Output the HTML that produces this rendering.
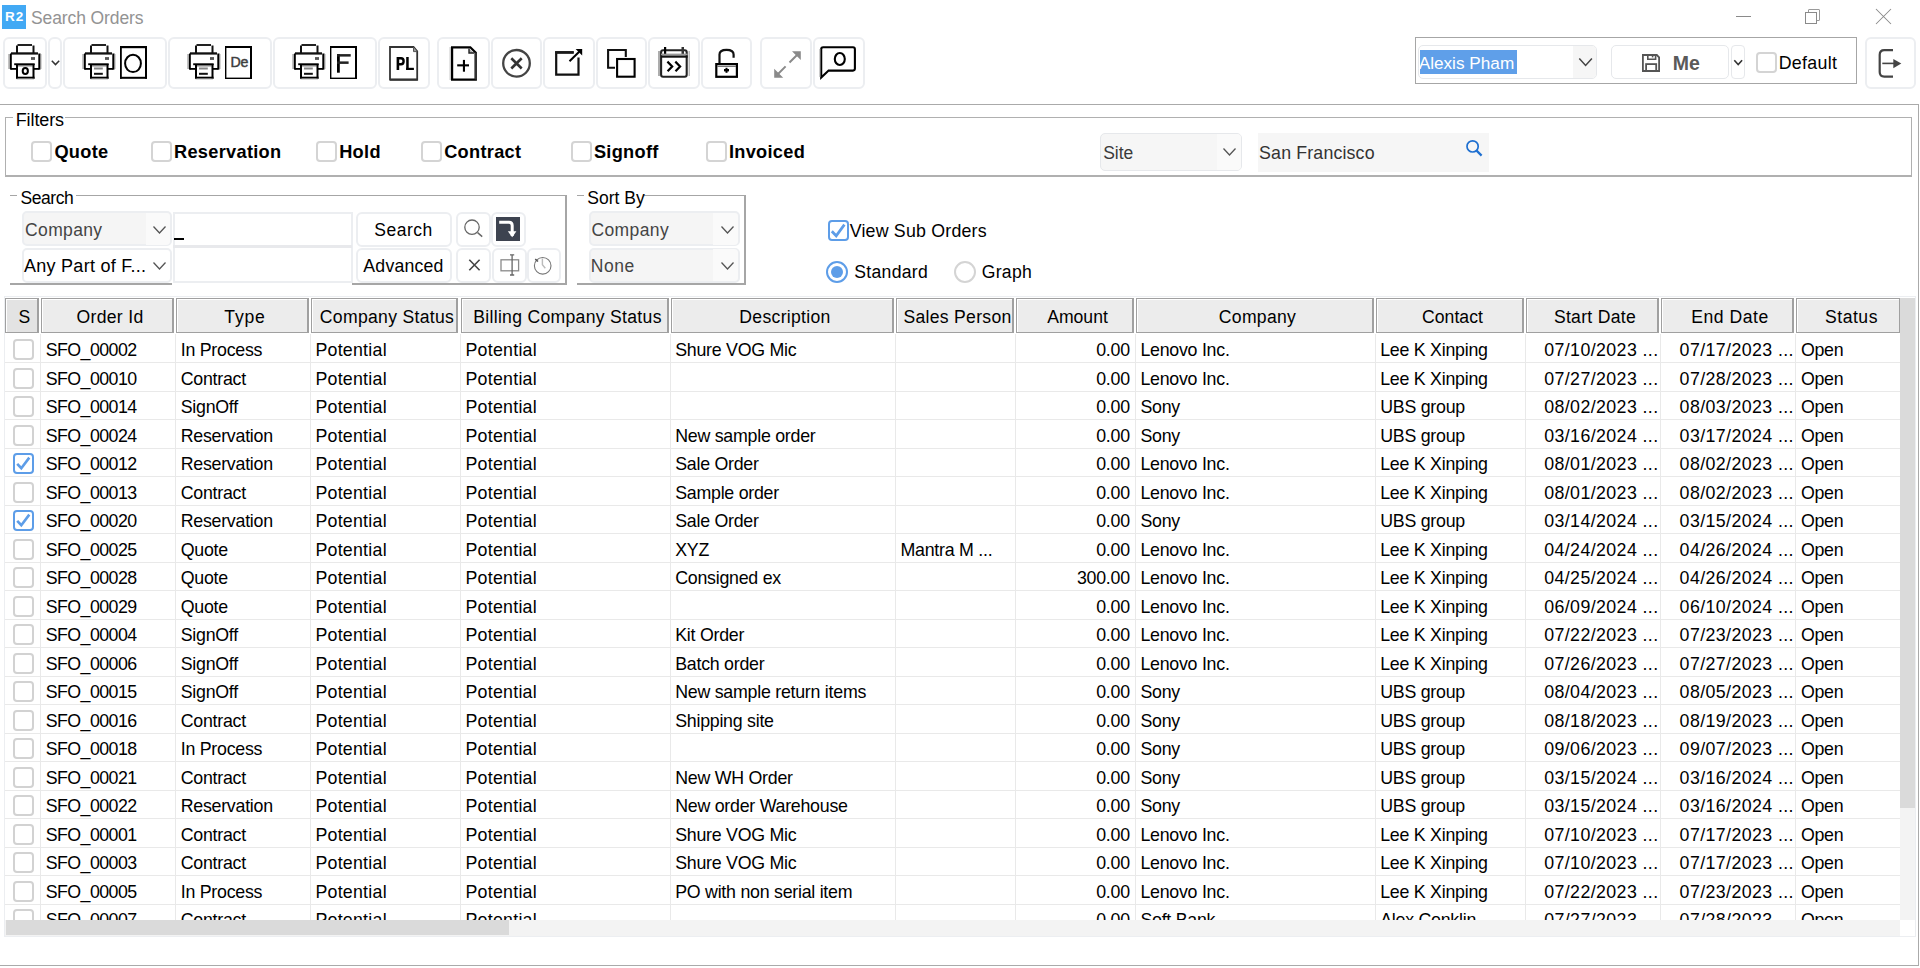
<!DOCTYPE html>
<html><head><meta charset="utf-8"><style>
html,body{margin:0;padding:0;background:#fff;width:1920px;height:968px;overflow:hidden;position:relative}
.t{position:absolute;white-space:nowrap;font-family:"Liberation Sans", sans-serif}
</style></head><body>
<div style="position:absolute;left:2px;top:5px;width:24px;height:24px;background:#42a9f4"></div>
<div class="t" style="left:2.6px;top:10.17px;font-size:13.5px;line-height:13.5px;font-weight:700;color:#fff;width:24px;text-align:center;letter-spacing:0.9px">R2</div>
<div class="t" style="left:30.999999999999996px;top:10.19px;font-size:17.5px;line-height:17.5px;font-weight:400;color:#939393;letter-spacing:-0.1px">Search Orders</div>
<div style="position:absolute;left:1736px;top:16px;width:15px;height:1px;background:#8a8a8a"></div>
<div style="position:absolute;left:1808px;top:9px;width:12px;height:12px;border:1px solid #9a9a9a;border-radius:1px;box-sizing:border-box"></div>
<div style="position:absolute;left:1805px;top:12px;width:12px;height:12px;border:1px solid #8a8a8a;background:#fff;box-sizing:border-box"></div>
<svg style="position:absolute;left:1875px;top:8px" width="17" height="17" viewBox="0 0 17 17"><path d="M1 1L16 16M16 1L1 16" stroke="#8a8a8a" stroke-width="1.05"/></svg>
<div style="position:absolute;left:2.5px;top:36.5px;width:44px;height:52px;border:2px solid #eceef1;border-radius:6px;box-sizing:border-box;background:#fff"></div>
<div style="position:absolute;left:47.5px;top:36.5px;width:14px;height:52px;border:2px solid #eceef1;border-radius:6px;box-sizing:border-box;background:#fff"></div>
<div style="position:absolute;left:62.5px;top:36.5px;width:104px;height:52px;border:2px solid #eceef1;border-radius:6px;box-sizing:border-box;background:#fff"></div>
<div style="position:absolute;left:167.5px;top:36.5px;width:104px;height:52px;border:2px solid #eceef1;border-radius:6px;box-sizing:border-box;background:#fff"></div>
<div style="position:absolute;left:272.5px;top:36.5px;width:104px;height:52px;border:2px solid #eceef1;border-radius:6px;box-sizing:border-box;background:#fff"></div>
<div style="position:absolute;left:377.5px;top:36.5px;width:52px;height:52px;border:2px solid #eceef1;border-radius:6px;box-sizing:border-box;background:#fff"></div>
<div style="position:absolute;left:436.5px;top:36.5px;width:53px;height:52px;border:2px solid #eceef1;border-radius:6px;box-sizing:border-box;background:#fff"></div>
<div style="position:absolute;left:490.5px;top:36.5px;width:51px;height:52px;border:2px solid #eceef1;border-radius:6px;box-sizing:border-box;background:#fff"></div>
<div style="position:absolute;left:542.5px;top:36.5px;width:52px;height:52px;border:2px solid #eceef1;border-radius:6px;box-sizing:border-box;background:#fff"></div>
<div style="position:absolute;left:595.5px;top:36.5px;width:51px;height:52px;border:2px solid #eceef1;border-radius:6px;box-sizing:border-box;background:#fff"></div>
<div style="position:absolute;left:647.5px;top:36.5px;width:52px;height:52px;border:2px solid #eceef1;border-radius:6px;box-sizing:border-box;background:#fff"></div>
<div style="position:absolute;left:700.5px;top:36.5px;width:51px;height:52px;border:2px solid #eceef1;border-radius:6px;box-sizing:border-box;background:#fff"></div>
<div style="position:absolute;left:759.5px;top:36.5px;width:52px;height:52px;border:2px solid #eceef1;border-radius:6px;box-sizing:border-box;background:#fff"></div>
<div style="position:absolute;left:812.5px;top:36.5px;width:52px;height:52px;border:2px solid #eceef1;border-radius:6px;box-sizing:border-box;background:#fff"></div>
<div style="position:absolute;left:1415px;top:37px;width:442px;height:47px;border:1px solid #a6a6a6;box-sizing:border-box"></div>
<div style="position:absolute;left:1418px;top:45px;width:179px;height:34px;border:1px solid #e6e8eb;border-radius:5px;box-sizing:border-box;background:#fff"></div>
<div style="position:absolute;left:1573px;top:46px;width:23px;height:32px;background:#f6f6f6;border-radius:0 4px 4px 0"></div>
<div style="position:absolute;left:1420px;top:50px;width:97px;height:24px;background:#5f9fe9"></div>
<div class="t" style="left:1418.7px;top:55.44px;font-size:17.2px;line-height:17.2px;font-weight:400;color:#fff;">Alexis Pham</div>
<div style="position:absolute;left:1611px;top:45px;width:118px;height:34px;border:1px solid #e6e8eb;border-radius:5px;box-sizing:border-box;background:#fff"></div>
<div style="position:absolute;left:1731px;top:45px;width:14px;height:34px;border:1px solid #e6e8eb;border-radius:4px;box-sizing:border-box;background:#fff"></div>
<div class="t" style="left:1672.7px;top:53.99px;font-size:19.5px;line-height:19.5px;font-weight:700;color:#5a5a5a;">Me</div>
<div style="position:absolute;left:1756px;top:52px;width:21px;height:21px;border:2px solid #d4d4d4;border-radius:4px;box-sizing:border-box;background:#fff"></div>
<div class="t" style="left:1778.7px;top:54.93px;font-size:17.8px;line-height:17.8px;font-weight:400;color:#000;letter-spacing:0.3px">Default</div>
<div style="position:absolute;left:1864.5px;top:36.5px;width:51px;height:52px;border:2px solid #eceef1;border-radius:6px;box-sizing:border-box;background:#fff"></div>
<svg style="position:absolute;left:0;top:0" width="1920" height="100" viewBox="0 0 1920 100"><rect x="17.5" y="44" width="14.5" height="2" fill="#222"/><rect x="16" y="45.5" width="2" height="8" fill="#111"/><rect x="32.5" y="45.5" width="2" height="8" fill="#111"/><rect x="11" y="52.3" width="27" height="2.3" fill="#111"/><rect x="10" y="53.5" width="1.8" height="16" fill="#000"/><rect x="8.3" y="54" width="1.7" height="15" fill="#aaa"/><rect x="38.3" y="53.5" width="2.2" height="16" fill="#000"/><rect x="40.5" y="54" width="0.9" height="15" fill="#999"/><rect x="10.5" y="68" width="5.5" height="1.8" fill="#000"/><rect x="34" y="68" width="5.5" height="1.8" fill="#000"/><rect x="14.2" y="63.3" width="20.5" height="1.9" fill="#000"/><rect x="16.2" y="65.2" width="16.5" height="1.2" fill="#666"/><rect x="16" y="64" width="2" height="14.7" fill="#000"/><rect x="32.5" y="64" width="2" height="14.7" fill="#000"/><rect x="16" y="76.7" width="18.5" height="2" fill="#000"/><rect x="16.5" y="78.7" width="17.5" height="1" fill="#ccc"/><rect x="31" y="57.1" width="4" height="2.8" fill="#555"/><ellipse cx="25.3" cy="71" rx="2.6" ry="3.1" fill="none" stroke="#000" stroke-width="2"/><path d="M51.8,60.8 L55.5,64.6 L59.2,60.8" fill="none" stroke="#333" stroke-width="1.5"/><rect x="91.5" y="44" width="14.5" height="2" fill="#222"/><rect x="90" y="45.5" width="2" height="8" fill="#111"/><rect x="106.5" y="45.5" width="2" height="8" fill="#111"/><rect x="85" y="52.3" width="27" height="2.3" fill="#111"/><rect x="84" y="53.5" width="1.8" height="16" fill="#000"/><rect x="82.3" y="54" width="1.7" height="15" fill="#aaa"/><rect x="112.3" y="53.5" width="2.2" height="16" fill="#000"/><rect x="114.5" y="54" width="0.9" height="15" fill="#999"/><rect x="84.5" y="68" width="5.5" height="1.8" fill="#000"/><rect x="108" y="68" width="5.5" height="1.8" fill="#000"/><rect x="88.2" y="63.3" width="20.5" height="1.9" fill="#000"/><rect x="90.2" y="65.2" width="16.5" height="1.2" fill="#666"/><rect x="90" y="64" width="2" height="14.7" fill="#000"/><rect x="106.5" y="64" width="2" height="14.7" fill="#000"/><rect x="90" y="76.7" width="18.5" height="2" fill="#000"/><rect x="90.5" y="78.7" width="17.5" height="1" fill="#ccc"/><rect x="105" y="57.1" width="4" height="2.8" fill="#555"/><rect x="94" y="67.5" width="8.8" height="2" fill="#888"/><rect x="94" y="72.8" width="8.8" height="2" fill="#111"/><rect x="120" y="46" width="27" height="2.2" fill="#000"/><rect x="120" y="46" width="1.8" height="32.7" fill="#000"/><rect x="145" y="46" width="2" height="32.7" fill="#000"/><rect x="120" y="76.8" width="27" height="2" fill="#000"/><ellipse cx="133" cy="63.4" rx="7.9" ry="8.7" fill="none" stroke="#000" stroke-width="2"/><rect x="196.5" y="44" width="14.5" height="2" fill="#222"/><rect x="195" y="45.5" width="2" height="8" fill="#111"/><rect x="211.5" y="45.5" width="2" height="8" fill="#111"/><rect x="190" y="52.3" width="27" height="2.3" fill="#111"/><rect x="189" y="53.5" width="1.8" height="16" fill="#000"/><rect x="187.3" y="54" width="1.7" height="15" fill="#aaa"/><rect x="217.3" y="53.5" width="2.2" height="16" fill="#000"/><rect x="219.5" y="54" width="0.9" height="15" fill="#999"/><rect x="189.5" y="68" width="5.5" height="1.8" fill="#000"/><rect x="213" y="68" width="5.5" height="1.8" fill="#000"/><rect x="193.2" y="63.3" width="20.5" height="1.9" fill="#000"/><rect x="195.2" y="65.2" width="16.5" height="1.2" fill="#666"/><rect x="195" y="64" width="2" height="14.7" fill="#000"/><rect x="211.5" y="64" width="2" height="14.7" fill="#000"/><rect x="195" y="76.7" width="18.5" height="2" fill="#000"/><rect x="195.5" y="78.7" width="17.5" height="1" fill="#ccc"/><rect x="210" y="57.1" width="4" height="2.8" fill="#555"/><rect x="199" y="67.5" width="8.8" height="2" fill="#888"/><rect x="199" y="72.8" width="8.8" height="2" fill="#111"/><rect x="225" y="46" width="27" height="2" fill="#000"/><rect x="225" y="46" width="1.4" height="33" fill="#000"/><rect x="250" y="46" width="2" height="33" fill="#000"/><rect x="225" y="77.6" width="27" height="1.4" fill="#000"/><text x="230.6" y="66.8" font-family="Liberation Sans" font-size="14.2" fill="#2a2a2a" stroke="#555" stroke-width="0.5" letter-spacing="-0.3">De</text><rect x="301.5" y="44" width="14.5" height="2" fill="#222"/><rect x="300" y="45.5" width="2" height="8" fill="#111"/><rect x="316.5" y="45.5" width="2" height="8" fill="#111"/><rect x="295" y="52.3" width="27" height="2.3" fill="#111"/><rect x="294" y="53.5" width="1.8" height="16" fill="#000"/><rect x="292.3" y="54" width="1.7" height="15" fill="#aaa"/><rect x="322.3" y="53.5" width="2.2" height="16" fill="#000"/><rect x="324.5" y="54" width="0.9" height="15" fill="#999"/><rect x="294.5" y="68" width="5.5" height="1.8" fill="#000"/><rect x="318" y="68" width="5.5" height="1.8" fill="#000"/><rect x="298.2" y="63.3" width="20.5" height="1.9" fill="#000"/><rect x="300.2" y="65.2" width="16.5" height="1.2" fill="#666"/><rect x="300" y="64" width="2" height="14.7" fill="#000"/><rect x="316.5" y="64" width="2" height="14.7" fill="#000"/><rect x="300" y="76.7" width="18.5" height="2" fill="#000"/><rect x="300.5" y="78.7" width="17.5" height="1" fill="#ccc"/><rect x="315" y="57.1" width="4" height="2.8" fill="#555"/><rect x="304" y="67.5" width="8.8" height="2" fill="#888"/><rect x="304" y="72.8" width="8.8" height="2" fill="#111"/><rect x="330" y="46" width="27" height="2" fill="#000"/><rect x="330" y="46" width="1.4" height="33" fill="#000"/><rect x="355" y="46" width="2" height="33" fill="#000"/><rect x="330" y="77.6" width="27" height="1.4" fill="#000"/><rect x="337" y="54.1" width="2.8" height="18.6" fill="#000"/><rect x="337" y="54.1" width="13.7" height="2.5" fill="#222"/><rect x="337" y="61.4" width="11.6" height="2.5" fill="#222"/><path d="M390,47 H413.5 L417.2,51.4 V79.7 H390 Z" fill="#fff" stroke="#333" stroke-width="1.8"/><rect x="390" y="78.6" width="27.8" height="2.1" fill="#333"/><path d="M413.5,47 V51.6 H417.2" fill="#999" stroke="#555" stroke-width="1"/><rect x="396.6" y="57" width="2.6" height="13" fill="#000"/><path d="M397.5,58.2 H401 Q403.6,58.2 403.6,61.2 Q403.6,64.2 401,64.2 H397.5" fill="none" stroke="#000" stroke-width="2.4"/><rect x="406.2" y="57" width="2.5" height="13" fill="#000"/><rect x="406.2" y="67.8" width="7.7" height="2.2" fill="#000"/><path d="M452.1,47.3 H470.3 L475.8,52.8 V79.6 H452.1 Z" fill="#fff" stroke="#000" stroke-width="2.2"/><rect x="474.6" y="52.5" width="2.3" height="27" fill="#333"/><path d="M469,48.5 V53 H474" fill="#aaa" stroke="#222" stroke-width="1.4"/><rect x="449.5" y="47" width="1.5" height="33" fill="#ccc"/><rect x="457.2" y="64.3" width="11.8" height="2.1" fill="#000"/><rect x="462.9" y="59.9" width="2.1" height="11.8" fill="#000"/><circle cx="516.5" cy="63.3" r="13.3" fill="none" stroke="#444" stroke-width="2.3"/><path d="M511.3,58.3 L521.7,68.5 M521.7,58.3 L511.3,68.5" stroke="#333" stroke-width="2.6"/><path d="M573.7,52.4 H556.2 V74.6 H578.5 V57.4" fill="none" stroke="#111" stroke-width="2.2"/><rect x="555.1" y="51.2" width="18.6" height="2.5" fill="#1a1a1a"/><path d="M569.5,61.3 L579.2,51.8" stroke="#000" stroke-width="2"/><path d="M575.6,49 H582.2 V55.4 Z" fill="#000"/><path d="M615,67.7 H608.1 V50 H625.8 V57" fill="none" stroke="#111" stroke-width="2.1"/><rect x="617.1" y="59" width="17.5" height="17.7" fill="none" stroke="#000" stroke-width="2.1"/><rect x="661.1" y="50.3" width="25.6" height="26.4" rx="2" fill="none" stroke="#222" stroke-width="2.1"/><rect x="658.2" y="51" width="1.6" height="25" fill="#999"/><rect x="688.6" y="51" width="1.2" height="25" fill="#aaa"/><rect x="661" y="55.4" width="26.6" height="2.3" fill="#111"/><rect x="661" y="53.6" width="26.6" height="1.6" fill="#999"/><rect x="664" y="47" width="2.2" height="6.8" fill="#000"/><rect x="681.5" y="47" width="2.5" height="6.8" fill="#333"/><path d="M667.4,61.6 L672.2,66.4 L667.6,71.3 M675.3,61.6 L680.1,66.4 L675.5,71.3" fill="none" stroke="#000" stroke-width="2.2"/><rect x="716.3" y="64.1" width="20.6" height="12.7" fill="none" stroke="#000" stroke-width="2.2"/><rect x="717" y="65.8" width="19" height="1.2" fill="#777"/><path d="M719.5,63 V54.5 Q719.5,49.8 726.5,49.8 Q733.6,49.8 733.6,54.5 V57.8" fill="none" stroke="#111" stroke-width="2.2"/><rect x="725.5" y="67.8" width="2" height="5" fill="#000"/><rect x="724" y="69" width="5" height="2.4" fill="#000"/><path d="M789.5,62.5 L799.3,52.7 M785.6,66.4 L775.8,76.2" stroke="#8a8a8a" stroke-width="2"/><path d="M792,51.2 H800.8 V60 Z M774.2,68.7 V77.7 H783.2 Z" fill="#8a8a8a"/><path d="M823.2,47.2 H853 Q854.9,47.2 854.9,49.2 V68.6 Q854.9,70.6 853,70.6 H828.6 L821.2,77.6 V49.2 Q821.2,47.2 823.2,47.2 Z" fill="none" stroke="#000" stroke-width="2.1"/><rect x="819.5" y="49" width="1" height="28" fill="#999"/><ellipse cx="839.8" cy="59" rx="5" ry="6" fill="none" stroke="#000" stroke-width="2.1"/><path d="M1579.3,58.5 L1585.6,65.5 L1591.9,58.5" fill="none" stroke="#444" stroke-width="1.5"/><path d="M1734.3,60.3 L1738.2,64.5 L1742.1,60.3" fill="none" stroke="#333" stroke-width="1.6"/><path d="M1642.9,55 H1656.8 L1659.1,57.3 V71 H1642.9 Z" fill="none" stroke="#555" stroke-width="1.8"/><path d="M1647.8,55 V59.2 H1655.6 V55" fill="none" stroke="#555" stroke-width="1.6"/><rect x="1651.8" y="55.6" width="1.6" height="1.8" fill="#555"/><rect x="1646.1" y="64.1" width="10.1" height="7" fill="none" stroke="#555" stroke-width="1.8"/><path d="M1893,50.2 H1884.3 Q1879.7,50.2 1879.7,54.8 V72.1 Q1879.7,76.7 1884.3,76.7 H1893" fill="none" stroke="#444" stroke-width="2.2"/><path d="M1882.3,63.4 H1894" stroke="#444" stroke-width="1.6"/><path d="M1893.3,58.9 L1901.3,63.6 L1893.3,68.3 Z" fill="#444"/></svg>
<div style="position:absolute;left:0px;top:104px;width:1919px;height:1px;background:#aaaaaa"></div>
<div style="position:absolute;left:1918px;top:104px;width:1px;height:862px;background:#aaaaaa"></div>
<div style="position:absolute;left:0px;top:965px;width:1919px;height:1px;background:#aaaaaa"></div>
<div style="position:absolute;left:5px;top:117px;width:1907px;height:60px;border:1px solid #b0b0b0;border-bottom:2px solid #b0b0b0;box-sizing:border-box"></div>
<div style="position:absolute;left:13px;top:110px;width:52px;height:14px;background:#fff"></div>
<div class="t" style="left:15.7px;top:110.76px;font-size:18px;line-height:18px;font-weight:400;color:#000;letter-spacing:-0.1px">Filters</div>
<div style="position:absolute;left:30.5px;top:140.5px;width:21px;height:21px;border:2px solid #d4d4d4;border-radius:4px;box-sizing:border-box;background:#fff"></div>
<div class="t" style="left:54.400000000000006px;top:143.39px;font-size:18.2px;line-height:18.2px;font-weight:700;color:#000;letter-spacing:0.3px">Quote</div>
<div style="position:absolute;left:151.0px;top:140.5px;width:21px;height:21px;border:2px solid #d4d4d4;border-radius:4px;box-sizing:border-box;background:#fff"></div>
<div class="t" style="left:174.0px;top:143.39px;font-size:18.2px;line-height:18.2px;font-weight:700;color:#000;letter-spacing:0.3px">Reservation</div>
<div style="position:absolute;left:315.5px;top:140.5px;width:21px;height:21px;border:2px solid #d4d4d4;border-radius:4px;box-sizing:border-box;background:#fff"></div>
<div class="t" style="left:339.2px;top:143.39px;font-size:18.2px;line-height:18.2px;font-weight:700;color:#000;letter-spacing:0.3px">Hold</div>
<div style="position:absolute;left:420.5px;top:140.5px;width:21px;height:21px;border:2px solid #d4d4d4;border-radius:4px;box-sizing:border-box;background:#fff"></div>
<div class="t" style="left:444.2px;top:143.39px;font-size:18.2px;line-height:18.2px;font-weight:700;color:#000;letter-spacing:0.3px">Contract</div>
<div style="position:absolute;left:570.5px;top:140.5px;width:21px;height:21px;border:2px solid #d4d4d4;border-radius:4px;box-sizing:border-box;background:#fff"></div>
<div class="t" style="left:593.9000000000001px;top:143.39px;font-size:18.2px;line-height:18.2px;font-weight:700;color:#000;letter-spacing:0.3px">Signoff</div>
<div style="position:absolute;left:705.5px;top:140.5px;width:21px;height:21px;border:2px solid #d4d4d4;border-radius:4px;box-sizing:border-box;background:#fff"></div>
<div class="t" style="left:728.9000000000001px;top:143.39px;font-size:18.2px;line-height:18.2px;font-weight:700;color:#000;letter-spacing:0.3px">Invoiced</div>
<div style="position:absolute;left:1100px;top:133px;width:142px;height:38px;border:1px solid #e6e8eb;border-radius:5px;box-sizing:border-box;background:#f6f6f6"></div>
<div style="position:absolute;left:1217px;top:134px;width:24px;height:36px;background:#fafafa;border-radius:0 4px 4px 0"></div>
<div class="t" style="left:1103.2px;top:145.19px;font-size:17.5px;line-height:17.5px;font-weight:400;color:#3a3a3a;">Site</div>
<div style="position:absolute;left:1258px;top:133px;width:231px;height:39px;background:#f6f6f6"></div>
<div class="t" style="left:1259.1000000000001px;top:144.93px;font-size:17.8px;line-height:17.8px;font-weight:400;color:#333;letter-spacing:0.15px">San Francisco</div>
<svg style="position:absolute;left:1222px;top:147px" width="15" height="10" viewBox="0 0 15 10"><path d="M1.5 1.5L7.5 8L13.5 1.5" stroke="#555" stroke-width="1.3" fill="none"/></svg>
<div style="position:absolute;left:10px;top:195px;width:7px;height:1px;background:#a6a6a6"></div>
<div style="position:absolute;left:76px;top:195px;width:491px;height:1px;background:#a6a6a6"></div>
<div style="position:absolute;left:565px;top:195px;width:2px;height:90px;background:#a6a6a6"></div>
<div style="position:absolute;left:10px;top:283px;width:162px;height:2px;background:#a6a6a6"></div>
<div style="position:absolute;left:352px;top:283px;width:215px;height:2px;background:#a6a6a6"></div>
<div class="t" style="left:20.4px;top:190.19px;font-size:17.5px;line-height:17.5px;font-weight:400;color:#000;letter-spacing:-0.4px">Search</div>
<div style="position:absolute;left:21.5px;top:211px;width:150px;height:35px;border:2px solid #eceef1;border-radius:5px;box-sizing:border-box;background:#f5f5f5"></div>
<div style="position:absolute;left:146px;top:213px;width:24px;height:32px;background:#fafafa;border-radius:0 4px 4px 0"></div>
<div class="t" style="left:25.099999999999998px;top:222.49px;font-size:17.5px;line-height:17.5px;font-weight:400;color:#444;letter-spacing:0.35px">Company</div>
<div style="position:absolute;left:21.5px;top:247.5px;width:150px;height:35px;border:2px solid #eceef1;border-radius:5px;box-sizing:border-box;background:#fff"></div>
<div class="t" style="left:24.0px;top:256.96px;font-size:18px;line-height:18px;font-weight:400;color:#000;letter-spacing:0.27px">Any Part of F...</div>
<svg style="position:absolute;left:152px;top:225px" width="15" height="10" viewBox="0 0 15 10"><path d="M1.5 1.5L7.5 8L13.5 1.5" stroke="#555" stroke-width="1.3" fill="none"/></svg>
<svg style="position:absolute;left:152px;top:261px" width="15" height="10" viewBox="0 0 15 10"><path d="M1.5 1.5L7.5 8L13.5 1.5" stroke="#555" stroke-width="1.3" fill="none"/></svg>
<div style="position:absolute;left:172.5px;top:211.5px;width:180px;height:71px;border:2px solid #eceef1;box-sizing:border-box;background:#fff"></div>
<div style="position:absolute;left:173px;top:245px;width:179px;height:3px;background:#e8e9ec"></div>
<div style="position:absolute;left:174px;top:238px;width:10px;height:2px;background:#000"></div>
<div style="position:absolute;left:355.5px;top:211.5px;width:96px;height:35px;border:2px solid #eceef1;border-radius:6px;box-sizing:border-box;background:#fff"></div>
<div style="position:absolute;left:355.5px;top:247.5px;width:96px;height:35px;border:2px solid #eceef1;border-radius:6px;box-sizing:border-box;background:#fff"></div>
<div style="position:absolute;left:455.5px;top:211.5px;width:35px;height:35px;border:2px solid #eceef1;border-radius:6px;box-sizing:border-box;background:#fff"></div>
<div style="position:absolute;left:490.5px;top:211.5px;width:35px;height:35px;border:2px solid #eceef1;border-radius:6px;box-sizing:border-box;background:#fff"></div>
<div style="position:absolute;left:455.5px;top:247.5px;width:35px;height:35px;border:2px solid #eceef1;border-radius:6px;box-sizing:border-box;background:#fff"></div>
<div style="position:absolute;left:491.5px;top:247.5px;width:35px;height:35px;border:2px solid #eceef1;border-radius:6px;box-sizing:border-box;background:#fff"></div>
<div style="position:absolute;left:526.5px;top:247.5px;width:34px;height:35px;border:2px solid #eceef1;border-radius:6px;box-sizing:border-box;background:#fff"></div>
<div class="t" style="left:356px;top:221.79px;font-size:17.5px;line-height:17.5px;font-weight:400;color:#000;width:95px;text-align:center;letter-spacing:0.5px">Search</div>
<div class="t" style="left:356px;top:257.62px;font-size:17.7px;line-height:17.7px;font-weight:400;color:#000;width:95px;text-align:center;letter-spacing:0.2px">Advanced</div>
<svg style="position:absolute;left:0;top:0" width="1920" height="300" viewBox="0 0 1920 300"><circle cx="472" cy="227.2" r="7.2" fill="none" stroke="#666" stroke-width="1.3"/><path d="M477.6,232.6 L482.2,236.6" stroke="#666" stroke-width="1.4"/><rect x="496" y="217" width="24" height="24" fill="#3d4350"/><path d="M499.2,222.3 H509 Q512.2,222.3 512.2,225.5 V236" fill="none" stroke="#fff" stroke-width="3"/><path d="M507.8,231.2 H516.4 L512.2,237.3 Z" fill="#fff"/><path d="M469.3,259.8 L479.6,270.3 M479.6,259.8 L469.3,270.3" stroke="#444" stroke-width="1.6"/><rect x="501" y="259.8" width="17.6" height="11" fill="none" stroke="#8a8a8a" stroke-width="1.3"/><path d="M512.1,254.5 V275.2 M510,254.8 H514.2 M510,275 H514.2" stroke="#666" stroke-width="1.3"/><circle cx="542.7" cy="265.8" r="8.3" fill="none" stroke="#777" stroke-width="1.1"/><path d="M542.4,258.5 V264.8 L545.3,268.2" fill="none" stroke="#bbb" stroke-width="1.4"/><path d="M535.2,259.2 L538,261.5" stroke="#555" stroke-width="1.5"/><circle cx="1472.6" cy="146.4" r="5.6" fill="none" stroke="#1e6fd0" stroke-width="1.7"/><path d="M1476.6,150.6 L1481.6,155.6" stroke="#1e6fd0" stroke-width="2.2"/></svg>
<div style="position:absolute;left:577px;top:195px;width:7px;height:1px;background:#a6a6a6"></div>
<div style="position:absolute;left:644px;top:195px;width:101px;height:1px;background:#a6a6a6"></div>
<div style="position:absolute;left:744px;top:195px;width:2px;height:90px;background:#a6a6a6"></div>
<div style="position:absolute;left:577px;top:283px;width:169px;height:2px;background:#a6a6a6"></div>
<div class="t" style="left:587.3000000000001px;top:190.19px;font-size:17.5px;line-height:17.5px;font-weight:400;color:#000;">Sort By</div>
<div style="position:absolute;left:588.5px;top:211px;width:151px;height:35px;border:2px solid #eceef1;border-radius:5px;box-sizing:border-box;background:#f5f5f5"></div>
<div style="position:absolute;left:713px;top:213px;width:25px;height:32px;background:#fafafa;border-radius:0 4px 4px 0"></div>
<div class="t" style="left:591.4000000000001px;top:222.49px;font-size:17.5px;line-height:17.5px;font-weight:400;color:#444;letter-spacing:0.4px">Company</div>
<div style="position:absolute;left:588.5px;top:247.5px;width:151px;height:35px;border:2px solid #eceef1;border-radius:5px;box-sizing:border-box;background:#f5f5f5"></div>
<div style="position:absolute;left:713px;top:249px;width:25px;height:32px;background:#fafafa;border-radius:0 4px 4px 0"></div>
<div class="t" style="left:590.7px;top:258.49px;font-size:17.5px;line-height:17.5px;font-weight:400;color:#444;letter-spacing:0.6px">None</div>
<svg style="position:absolute;left:720px;top:225px" width="15" height="10" viewBox="0 0 15 10"><path d="M1.5 1.5L7.5 8L13.5 1.5" stroke="#555" stroke-width="1.3" fill="none"/></svg>
<svg style="position:absolute;left:720px;top:261px" width="15" height="10" viewBox="0 0 15 10"><path d="M1.5 1.5L7.5 8L13.5 1.5" stroke="#555" stroke-width="1.3" fill="none"/></svg>
<div style="position:absolute;left:827.5px;top:220px;width:21px;height:21px;border:2px solid #5d9de8;border-radius:4px;box-sizing:border-box;background:#fff"></div>
<svg style="position:absolute;left:828px;top:220px" width="21" height="21" viewBox="0 0 21 21"><path d="M3.8 11.2L8.2 15.8L16.4 4.6" stroke="#5d9de8" stroke-width="2.7" fill="none"/></svg>
<div class="t" style="left:849.7px;top:222.93px;font-size:17.8px;line-height:17.8px;font-weight:400;color:#000;letter-spacing:0.2px">View Sub Orders</div>
<div style="position:absolute;left:826px;top:261px;width:22px;height:22px;border:2px solid #5d9de8;border-radius:50%;box-sizing:border-box;background:#fff"></div>
<div style="position:absolute;left:831px;top:266px;width:12px;height:12px;background:#5d9de8;border-radius:50%"></div>
<div class="t" style="left:854.3000000000001px;top:263.90px;font-size:17.6px;line-height:17.6px;font-weight:400;color:#000;letter-spacing:0.3px">Standard</div>
<div style="position:absolute;left:954px;top:261px;width:22px;height:22px;border:2px solid #d4d4d4;border-radius:50%;box-sizing:border-box;background:#fff"></div>
<div class="t" style="left:981.7px;top:263.90px;font-size:17.6px;line-height:17.6px;font-weight:400;color:#000;letter-spacing:0.3px">Graph</div>
<div style="position:absolute;left:4px;top:296px;width:1912px;height:641px;border:1px solid #eceef1;box-sizing:border-box;background:#fff"></div>
<div style="position:absolute;left:5px;top:334px;width:1895px;height:586px;overflow:hidden">
<div style="position:absolute;left:35px;top:0;width:1px;height:586px;background:#e9e9e9"></div>
<div style="position:absolute;left:170px;top:0;width:1px;height:586px;background:#e9e9e9"></div>
<div style="position:absolute;left:305px;top:0;width:1px;height:586px;background:#e9e9e9"></div>
<div style="position:absolute;left:455px;top:0;width:1px;height:586px;background:#e9e9e9"></div>
<div style="position:absolute;left:665px;top:0;width:1px;height:586px;background:#e9e9e9"></div>
<div style="position:absolute;left:890px;top:0;width:1px;height:586px;background:#e9e9e9"></div>
<div style="position:absolute;left:1010px;top:0;width:1px;height:586px;background:#e9e9e9"></div>
<div style="position:absolute;left:1130px;top:0;width:1px;height:586px;background:#e9e9e9"></div>
<div style="position:absolute;left:1370px;top:0;width:1px;height:586px;background:#e9e9e9"></div>
<div style="position:absolute;left:1520px;top:0;width:1px;height:586px;background:#e9e9e9"></div>
<div style="position:absolute;left:1655px;top:0;width:1px;height:586px;background:#e9e9e9"></div>
<div style="position:absolute;left:1790px;top:0;width:1px;height:586px;background:#e9e9e9"></div>
<div style="position:absolute;left:0;top:28.20px;width:1895px;height:1px;background:#e9e9e9"></div>
<div style="position:absolute;left:8px;top:5.20px;width:21px;height:21px;border:2px solid #d2d2d2;border-radius:4px;box-sizing:border-box"></div>
<div class="t" style="left:40.7px;top:8.13px;font-size:17.8px;line-height:17.8px;font-weight:400;color:#000;letter-spacing:-0.55px">SFO_00002</div>
<div class="t" style="left:175.7px;top:8.13px;font-size:17.8px;line-height:17.8px;font-weight:400;color:#000;letter-spacing:-0.25px">In Process</div>
<div class="t" style="left:310.4px;top:8.13px;font-size:17.8px;line-height:17.8px;font-weight:400;color:#000;letter-spacing:0.25px">Potential</div>
<div class="t" style="left:460.5px;top:8.13px;font-size:17.8px;line-height:17.8px;font-weight:400;color:#000;letter-spacing:0.25px">Potential</div>
<div class="t" style="left:670.2px;top:8.13px;font-size:17.8px;line-height:17.8px;font-weight:400;color:#000;letter-spacing:-0.25px">Shure VOG Mic</div>
<div class="t" style="left:895.5px;top:8.13px;font-size:17.8px;line-height:17.8px;font-weight:400;color:#000;letter-spacing:-0.25px"></div>
<div class="t" style="left:1011px;top:8.13px;font-size:17.8px;line-height:17.8px;font-weight:400;color:#000;width:113.79999999999995px;text-align:right;letter-spacing:-0.25px">0.00</div>
<div class="t" style="left:1135.4px;top:8.13px;font-size:17.8px;line-height:17.8px;font-weight:400;color:#000;letter-spacing:-0.25px">Lenovo Inc.</div>
<div class="t" style="left:1375.2px;top:8.13px;font-size:17.8px;line-height:17.8px;font-weight:400;color:#000;letter-spacing:-0.25px">Lee K Xinping</div>
<div class="t" style="left:1539.2px;top:8.13px;font-size:17.8px;line-height:17.8px;font-weight:400;color:#000;letter-spacing:0.4px">07/10/2023 ...</div>
<div class="t" style="left:1674.6000000000001px;top:8.13px;font-size:17.8px;line-height:17.8px;font-weight:400;color:#000;letter-spacing:0.4px">07/17/2023 ...</div>
<div class="t" style="left:1795.9px;top:8.13px;font-size:17.8px;line-height:17.8px;font-weight:400;color:#000;letter-spacing:-0.25px">Open</div>
<div style="position:absolute;left:0;top:56.70px;width:1895px;height:1px;background:#e9e9e9"></div>
<div style="position:absolute;left:8px;top:33.70px;width:21px;height:21px;border:2px solid #d2d2d2;border-radius:4px;box-sizing:border-box"></div>
<div class="t" style="left:40.7px;top:36.63px;font-size:17.8px;line-height:17.8px;font-weight:400;color:#000;letter-spacing:-0.55px">SFO_00010</div>
<div class="t" style="left:175.7px;top:36.63px;font-size:17.8px;line-height:17.8px;font-weight:400;color:#000;letter-spacing:-0.25px">Contract</div>
<div class="t" style="left:310.4px;top:36.63px;font-size:17.8px;line-height:17.8px;font-weight:400;color:#000;letter-spacing:0.25px">Potential</div>
<div class="t" style="left:460.5px;top:36.63px;font-size:17.8px;line-height:17.8px;font-weight:400;color:#000;letter-spacing:0.25px">Potential</div>
<div class="t" style="left:670.2px;top:36.63px;font-size:17.8px;line-height:17.8px;font-weight:400;color:#000;letter-spacing:-0.25px"></div>
<div class="t" style="left:895.5px;top:36.63px;font-size:17.8px;line-height:17.8px;font-weight:400;color:#000;letter-spacing:-0.25px"></div>
<div class="t" style="left:1011px;top:36.63px;font-size:17.8px;line-height:17.8px;font-weight:400;color:#000;width:113.79999999999995px;text-align:right;letter-spacing:-0.25px">0.00</div>
<div class="t" style="left:1135.4px;top:36.63px;font-size:17.8px;line-height:17.8px;font-weight:400;color:#000;letter-spacing:-0.25px">Lenovo Inc.</div>
<div class="t" style="left:1375.2px;top:36.63px;font-size:17.8px;line-height:17.8px;font-weight:400;color:#000;letter-spacing:-0.25px">Lee K Xinping</div>
<div class="t" style="left:1539.2px;top:36.63px;font-size:17.8px;line-height:17.8px;font-weight:400;color:#000;letter-spacing:0.4px">07/27/2023 ...</div>
<div class="t" style="left:1674.6000000000001px;top:36.63px;font-size:17.8px;line-height:17.8px;font-weight:400;color:#000;letter-spacing:0.4px">07/28/2023 ...</div>
<div class="t" style="left:1795.9px;top:36.63px;font-size:17.8px;line-height:17.8px;font-weight:400;color:#000;letter-spacing:-0.25px">Open</div>
<div style="position:absolute;left:0;top:85.20px;width:1895px;height:1px;background:#e9e9e9"></div>
<div style="position:absolute;left:8px;top:62.20px;width:21px;height:21px;border:2px solid #d2d2d2;border-radius:4px;box-sizing:border-box"></div>
<div class="t" style="left:40.7px;top:65.13px;font-size:17.8px;line-height:17.8px;font-weight:400;color:#000;letter-spacing:-0.55px">SFO_00014</div>
<div class="t" style="left:175.7px;top:65.13px;font-size:17.8px;line-height:17.8px;font-weight:400;color:#000;letter-spacing:-0.25px">SignOff</div>
<div class="t" style="left:310.4px;top:65.13px;font-size:17.8px;line-height:17.8px;font-weight:400;color:#000;letter-spacing:0.25px">Potential</div>
<div class="t" style="left:460.5px;top:65.13px;font-size:17.8px;line-height:17.8px;font-weight:400;color:#000;letter-spacing:0.25px">Potential</div>
<div class="t" style="left:670.2px;top:65.13px;font-size:17.8px;line-height:17.8px;font-weight:400;color:#000;letter-spacing:-0.25px"></div>
<div class="t" style="left:895.5px;top:65.13px;font-size:17.8px;line-height:17.8px;font-weight:400;color:#000;letter-spacing:-0.25px"></div>
<div class="t" style="left:1011px;top:65.13px;font-size:17.8px;line-height:17.8px;font-weight:400;color:#000;width:113.79999999999995px;text-align:right;letter-spacing:-0.25px">0.00</div>
<div class="t" style="left:1135.4px;top:65.13px;font-size:17.8px;line-height:17.8px;font-weight:400;color:#000;letter-spacing:-0.25px">Sony</div>
<div class="t" style="left:1375.2px;top:65.13px;font-size:17.8px;line-height:17.8px;font-weight:400;color:#000;letter-spacing:-0.25px">UBS group</div>
<div class="t" style="left:1539.2px;top:65.13px;font-size:17.8px;line-height:17.8px;font-weight:400;color:#000;letter-spacing:0.4px">08/02/2023 ...</div>
<div class="t" style="left:1674.6000000000001px;top:65.13px;font-size:17.8px;line-height:17.8px;font-weight:400;color:#000;letter-spacing:0.4px">08/03/2023 ...</div>
<div class="t" style="left:1795.9px;top:65.13px;font-size:17.8px;line-height:17.8px;font-weight:400;color:#000;letter-spacing:-0.25px">Open</div>
<div style="position:absolute;left:0;top:113.70px;width:1895px;height:1px;background:#e9e9e9"></div>
<div style="position:absolute;left:8px;top:90.70px;width:21px;height:21px;border:2px solid #d2d2d2;border-radius:4px;box-sizing:border-box"></div>
<div class="t" style="left:40.7px;top:93.63px;font-size:17.8px;line-height:17.8px;font-weight:400;color:#000;letter-spacing:-0.55px">SFO_00024</div>
<div class="t" style="left:175.7px;top:93.63px;font-size:17.8px;line-height:17.8px;font-weight:400;color:#000;letter-spacing:-0.25px">Reservation</div>
<div class="t" style="left:310.4px;top:93.63px;font-size:17.8px;line-height:17.8px;font-weight:400;color:#000;letter-spacing:0.25px">Potential</div>
<div class="t" style="left:460.5px;top:93.63px;font-size:17.8px;line-height:17.8px;font-weight:400;color:#000;letter-spacing:0.25px">Potential</div>
<div class="t" style="left:670.2px;top:93.63px;font-size:17.8px;line-height:17.8px;font-weight:400;color:#000;letter-spacing:-0.25px">New sample order</div>
<div class="t" style="left:895.5px;top:93.63px;font-size:17.8px;line-height:17.8px;font-weight:400;color:#000;letter-spacing:-0.25px"></div>
<div class="t" style="left:1011px;top:93.63px;font-size:17.8px;line-height:17.8px;font-weight:400;color:#000;width:113.79999999999995px;text-align:right;letter-spacing:-0.25px">0.00</div>
<div class="t" style="left:1135.4px;top:93.63px;font-size:17.8px;line-height:17.8px;font-weight:400;color:#000;letter-spacing:-0.25px">Sony</div>
<div class="t" style="left:1375.2px;top:93.63px;font-size:17.8px;line-height:17.8px;font-weight:400;color:#000;letter-spacing:-0.25px">UBS group</div>
<div class="t" style="left:1539.2px;top:93.63px;font-size:17.8px;line-height:17.8px;font-weight:400;color:#000;letter-spacing:0.4px">03/16/2024 ...</div>
<div class="t" style="left:1674.6000000000001px;top:93.63px;font-size:17.8px;line-height:17.8px;font-weight:400;color:#000;letter-spacing:0.4px">03/17/2024 ...</div>
<div class="t" style="left:1795.9px;top:93.63px;font-size:17.8px;line-height:17.8px;font-weight:400;color:#000;letter-spacing:-0.25px">Open</div>
<div style="position:absolute;left:0;top:142.20px;width:1895px;height:1px;background:#e9e9e9"></div>
<div style="position:absolute;left:8px;top:119.20px;width:21px;height:21px;border:2px solid #5d9de8;border-radius:4px;box-sizing:border-box"></div>
<svg style="position:absolute;left:8px;top:119.20px" width="21" height="21" viewBox="0 0 21 21"><path d="M4.2 10.8L8.3 15.2L16.3 4.6" stroke="#5d9de8" stroke-width="2.6" fill="none"/></svg>
<div class="t" style="left:40.7px;top:122.13px;font-size:17.8px;line-height:17.8px;font-weight:400;color:#000;letter-spacing:-0.55px">SFO_00012</div>
<div class="t" style="left:175.7px;top:122.13px;font-size:17.8px;line-height:17.8px;font-weight:400;color:#000;letter-spacing:-0.25px">Reservation</div>
<div class="t" style="left:310.4px;top:122.13px;font-size:17.8px;line-height:17.8px;font-weight:400;color:#000;letter-spacing:0.25px">Potential</div>
<div class="t" style="left:460.5px;top:122.13px;font-size:17.8px;line-height:17.8px;font-weight:400;color:#000;letter-spacing:0.25px">Potential</div>
<div class="t" style="left:670.2px;top:122.13px;font-size:17.8px;line-height:17.8px;font-weight:400;color:#000;letter-spacing:-0.25px">Sale Order</div>
<div class="t" style="left:895.5px;top:122.13px;font-size:17.8px;line-height:17.8px;font-weight:400;color:#000;letter-spacing:-0.25px"></div>
<div class="t" style="left:1011px;top:122.13px;font-size:17.8px;line-height:17.8px;font-weight:400;color:#000;width:113.79999999999995px;text-align:right;letter-spacing:-0.25px">0.00</div>
<div class="t" style="left:1135.4px;top:122.13px;font-size:17.8px;line-height:17.8px;font-weight:400;color:#000;letter-spacing:-0.25px">Lenovo Inc.</div>
<div class="t" style="left:1375.2px;top:122.13px;font-size:17.8px;line-height:17.8px;font-weight:400;color:#000;letter-spacing:-0.25px">Lee K Xinping</div>
<div class="t" style="left:1539.2px;top:122.13px;font-size:17.8px;line-height:17.8px;font-weight:400;color:#000;letter-spacing:0.4px">08/01/2023 ...</div>
<div class="t" style="left:1674.6000000000001px;top:122.13px;font-size:17.8px;line-height:17.8px;font-weight:400;color:#000;letter-spacing:0.4px">08/02/2023 ...</div>
<div class="t" style="left:1795.9px;top:122.13px;font-size:17.8px;line-height:17.8px;font-weight:400;color:#000;letter-spacing:-0.25px">Open</div>
<div style="position:absolute;left:0;top:170.70px;width:1895px;height:1px;background:#e9e9e9"></div>
<div style="position:absolute;left:8px;top:147.70px;width:21px;height:21px;border:2px solid #d2d2d2;border-radius:4px;box-sizing:border-box"></div>
<div class="t" style="left:40.7px;top:150.63px;font-size:17.8px;line-height:17.8px;font-weight:400;color:#000;letter-spacing:-0.55px">SFO_00013</div>
<div class="t" style="left:175.7px;top:150.63px;font-size:17.8px;line-height:17.8px;font-weight:400;color:#000;letter-spacing:-0.25px">Contract</div>
<div class="t" style="left:310.4px;top:150.63px;font-size:17.8px;line-height:17.8px;font-weight:400;color:#000;letter-spacing:0.25px">Potential</div>
<div class="t" style="left:460.5px;top:150.63px;font-size:17.8px;line-height:17.8px;font-weight:400;color:#000;letter-spacing:0.25px">Potential</div>
<div class="t" style="left:670.2px;top:150.63px;font-size:17.8px;line-height:17.8px;font-weight:400;color:#000;letter-spacing:-0.25px">Sample order</div>
<div class="t" style="left:895.5px;top:150.63px;font-size:17.8px;line-height:17.8px;font-weight:400;color:#000;letter-spacing:-0.25px"></div>
<div class="t" style="left:1011px;top:150.63px;font-size:17.8px;line-height:17.8px;font-weight:400;color:#000;width:113.79999999999995px;text-align:right;letter-spacing:-0.25px">0.00</div>
<div class="t" style="left:1135.4px;top:150.63px;font-size:17.8px;line-height:17.8px;font-weight:400;color:#000;letter-spacing:-0.25px">Lenovo Inc.</div>
<div class="t" style="left:1375.2px;top:150.63px;font-size:17.8px;line-height:17.8px;font-weight:400;color:#000;letter-spacing:-0.25px">Lee K Xinping</div>
<div class="t" style="left:1539.2px;top:150.63px;font-size:17.8px;line-height:17.8px;font-weight:400;color:#000;letter-spacing:0.4px">08/01/2023 ...</div>
<div class="t" style="left:1674.6000000000001px;top:150.63px;font-size:17.8px;line-height:17.8px;font-weight:400;color:#000;letter-spacing:0.4px">08/02/2023 ...</div>
<div class="t" style="left:1795.9px;top:150.63px;font-size:17.8px;line-height:17.8px;font-weight:400;color:#000;letter-spacing:-0.25px">Open</div>
<div style="position:absolute;left:0;top:199.20px;width:1895px;height:1px;background:#e9e9e9"></div>
<div style="position:absolute;left:8px;top:176.20px;width:21px;height:21px;border:2px solid #5d9de8;border-radius:4px;box-sizing:border-box"></div>
<svg style="position:absolute;left:8px;top:176.20px" width="21" height="21" viewBox="0 0 21 21"><path d="M4.2 10.8L8.3 15.2L16.3 4.6" stroke="#5d9de8" stroke-width="2.6" fill="none"/></svg>
<div class="t" style="left:40.7px;top:179.13px;font-size:17.8px;line-height:17.8px;font-weight:400;color:#000;letter-spacing:-0.55px">SFO_00020</div>
<div class="t" style="left:175.7px;top:179.13px;font-size:17.8px;line-height:17.8px;font-weight:400;color:#000;letter-spacing:-0.25px">Reservation</div>
<div class="t" style="left:310.4px;top:179.13px;font-size:17.8px;line-height:17.8px;font-weight:400;color:#000;letter-spacing:0.25px">Potential</div>
<div class="t" style="left:460.5px;top:179.13px;font-size:17.8px;line-height:17.8px;font-weight:400;color:#000;letter-spacing:0.25px">Potential</div>
<div class="t" style="left:670.2px;top:179.13px;font-size:17.8px;line-height:17.8px;font-weight:400;color:#000;letter-spacing:-0.25px">Sale Order</div>
<div class="t" style="left:895.5px;top:179.13px;font-size:17.8px;line-height:17.8px;font-weight:400;color:#000;letter-spacing:-0.25px"></div>
<div class="t" style="left:1011px;top:179.13px;font-size:17.8px;line-height:17.8px;font-weight:400;color:#000;width:113.79999999999995px;text-align:right;letter-spacing:-0.25px">0.00</div>
<div class="t" style="left:1135.4px;top:179.13px;font-size:17.8px;line-height:17.8px;font-weight:400;color:#000;letter-spacing:-0.25px">Sony</div>
<div class="t" style="left:1375.2px;top:179.13px;font-size:17.8px;line-height:17.8px;font-weight:400;color:#000;letter-spacing:-0.25px">UBS group</div>
<div class="t" style="left:1539.2px;top:179.13px;font-size:17.8px;line-height:17.8px;font-weight:400;color:#000;letter-spacing:0.4px">03/14/2024 ...</div>
<div class="t" style="left:1674.6000000000001px;top:179.13px;font-size:17.8px;line-height:17.8px;font-weight:400;color:#000;letter-spacing:0.4px">03/15/2024 ...</div>
<div class="t" style="left:1795.9px;top:179.13px;font-size:17.8px;line-height:17.8px;font-weight:400;color:#000;letter-spacing:-0.25px">Open</div>
<div style="position:absolute;left:0;top:227.70px;width:1895px;height:1px;background:#e9e9e9"></div>
<div style="position:absolute;left:8px;top:204.70px;width:21px;height:21px;border:2px solid #d2d2d2;border-radius:4px;box-sizing:border-box"></div>
<div class="t" style="left:40.7px;top:207.63px;font-size:17.8px;line-height:17.8px;font-weight:400;color:#000;letter-spacing:-0.55px">SFO_00025</div>
<div class="t" style="left:175.7px;top:207.63px;font-size:17.8px;line-height:17.8px;font-weight:400;color:#000;letter-spacing:-0.25px">Quote</div>
<div class="t" style="left:310.4px;top:207.63px;font-size:17.8px;line-height:17.8px;font-weight:400;color:#000;letter-spacing:0.25px">Potential</div>
<div class="t" style="left:460.5px;top:207.63px;font-size:17.8px;line-height:17.8px;font-weight:400;color:#000;letter-spacing:0.25px">Potential</div>
<div class="t" style="left:670.2px;top:207.63px;font-size:17.8px;line-height:17.8px;font-weight:400;color:#000;letter-spacing:-0.25px">XYZ</div>
<div class="t" style="left:895.5px;top:207.63px;font-size:17.8px;line-height:17.8px;font-weight:400;color:#000;letter-spacing:-0.25px">Mantra M ...</div>
<div class="t" style="left:1011px;top:207.63px;font-size:17.8px;line-height:17.8px;font-weight:400;color:#000;width:113.79999999999995px;text-align:right;letter-spacing:-0.25px">0.00</div>
<div class="t" style="left:1135.4px;top:207.63px;font-size:17.8px;line-height:17.8px;font-weight:400;color:#000;letter-spacing:-0.25px">Lenovo Inc.</div>
<div class="t" style="left:1375.2px;top:207.63px;font-size:17.8px;line-height:17.8px;font-weight:400;color:#000;letter-spacing:-0.25px">Lee K Xinping</div>
<div class="t" style="left:1539.2px;top:207.63px;font-size:17.8px;line-height:17.8px;font-weight:400;color:#000;letter-spacing:0.4px">04/24/2024 ...</div>
<div class="t" style="left:1674.6000000000001px;top:207.63px;font-size:17.8px;line-height:17.8px;font-weight:400;color:#000;letter-spacing:0.4px">04/26/2024 ...</div>
<div class="t" style="left:1795.9px;top:207.63px;font-size:17.8px;line-height:17.8px;font-weight:400;color:#000;letter-spacing:-0.25px">Open</div>
<div style="position:absolute;left:0;top:256.20px;width:1895px;height:1px;background:#e9e9e9"></div>
<div style="position:absolute;left:8px;top:233.20px;width:21px;height:21px;border:2px solid #d2d2d2;border-radius:4px;box-sizing:border-box"></div>
<div class="t" style="left:40.7px;top:236.13px;font-size:17.8px;line-height:17.8px;font-weight:400;color:#000;letter-spacing:-0.55px">SFO_00028</div>
<div class="t" style="left:175.7px;top:236.13px;font-size:17.8px;line-height:17.8px;font-weight:400;color:#000;letter-spacing:-0.25px">Quote</div>
<div class="t" style="left:310.4px;top:236.13px;font-size:17.8px;line-height:17.8px;font-weight:400;color:#000;letter-spacing:0.25px">Potential</div>
<div class="t" style="left:460.5px;top:236.13px;font-size:17.8px;line-height:17.8px;font-weight:400;color:#000;letter-spacing:0.25px">Potential</div>
<div class="t" style="left:670.2px;top:236.13px;font-size:17.8px;line-height:17.8px;font-weight:400;color:#000;letter-spacing:-0.25px">Consigned ex</div>
<div class="t" style="left:895.5px;top:236.13px;font-size:17.8px;line-height:17.8px;font-weight:400;color:#000;letter-spacing:-0.25px"></div>
<div class="t" style="left:1011px;top:236.13px;font-size:17.8px;line-height:17.8px;font-weight:400;color:#000;width:113.79999999999995px;text-align:right;letter-spacing:-0.25px">300.00</div>
<div class="t" style="left:1135.4px;top:236.13px;font-size:17.8px;line-height:17.8px;font-weight:400;color:#000;letter-spacing:-0.25px">Lenovo Inc.</div>
<div class="t" style="left:1375.2px;top:236.13px;font-size:17.8px;line-height:17.8px;font-weight:400;color:#000;letter-spacing:-0.25px">Lee K Xinping</div>
<div class="t" style="left:1539.2px;top:236.13px;font-size:17.8px;line-height:17.8px;font-weight:400;color:#000;letter-spacing:0.4px">04/25/2024 ...</div>
<div class="t" style="left:1674.6000000000001px;top:236.13px;font-size:17.8px;line-height:17.8px;font-weight:400;color:#000;letter-spacing:0.4px">04/26/2024 ...</div>
<div class="t" style="left:1795.9px;top:236.13px;font-size:17.8px;line-height:17.8px;font-weight:400;color:#000;letter-spacing:-0.25px">Open</div>
<div style="position:absolute;left:0;top:284.70px;width:1895px;height:1px;background:#e9e9e9"></div>
<div style="position:absolute;left:8px;top:261.70px;width:21px;height:21px;border:2px solid #d2d2d2;border-radius:4px;box-sizing:border-box"></div>
<div class="t" style="left:40.7px;top:264.63px;font-size:17.8px;line-height:17.8px;font-weight:400;color:#000;letter-spacing:-0.55px">SFO_00029</div>
<div class="t" style="left:175.7px;top:264.63px;font-size:17.8px;line-height:17.8px;font-weight:400;color:#000;letter-spacing:-0.25px">Quote</div>
<div class="t" style="left:310.4px;top:264.63px;font-size:17.8px;line-height:17.8px;font-weight:400;color:#000;letter-spacing:0.25px">Potential</div>
<div class="t" style="left:460.5px;top:264.63px;font-size:17.8px;line-height:17.8px;font-weight:400;color:#000;letter-spacing:0.25px">Potential</div>
<div class="t" style="left:670.2px;top:264.63px;font-size:17.8px;line-height:17.8px;font-weight:400;color:#000;letter-spacing:-0.25px"></div>
<div class="t" style="left:895.5px;top:264.63px;font-size:17.8px;line-height:17.8px;font-weight:400;color:#000;letter-spacing:-0.25px"></div>
<div class="t" style="left:1011px;top:264.63px;font-size:17.8px;line-height:17.8px;font-weight:400;color:#000;width:113.79999999999995px;text-align:right;letter-spacing:-0.25px">0.00</div>
<div class="t" style="left:1135.4px;top:264.63px;font-size:17.8px;line-height:17.8px;font-weight:400;color:#000;letter-spacing:-0.25px">Lenovo Inc.</div>
<div class="t" style="left:1375.2px;top:264.63px;font-size:17.8px;line-height:17.8px;font-weight:400;color:#000;letter-spacing:-0.25px">Lee K Xinping</div>
<div class="t" style="left:1539.2px;top:264.63px;font-size:17.8px;line-height:17.8px;font-weight:400;color:#000;letter-spacing:0.4px">06/09/2024 ...</div>
<div class="t" style="left:1674.6000000000001px;top:264.63px;font-size:17.8px;line-height:17.8px;font-weight:400;color:#000;letter-spacing:0.4px">06/10/2024 ...</div>
<div class="t" style="left:1795.9px;top:264.63px;font-size:17.8px;line-height:17.8px;font-weight:400;color:#000;letter-spacing:-0.25px">Open</div>
<div style="position:absolute;left:0;top:313.20px;width:1895px;height:1px;background:#e9e9e9"></div>
<div style="position:absolute;left:8px;top:290.20px;width:21px;height:21px;border:2px solid #d2d2d2;border-radius:4px;box-sizing:border-box"></div>
<div class="t" style="left:40.7px;top:293.13px;font-size:17.8px;line-height:17.8px;font-weight:400;color:#000;letter-spacing:-0.55px">SFO_00004</div>
<div class="t" style="left:175.7px;top:293.13px;font-size:17.8px;line-height:17.8px;font-weight:400;color:#000;letter-spacing:-0.25px">SignOff</div>
<div class="t" style="left:310.4px;top:293.13px;font-size:17.8px;line-height:17.8px;font-weight:400;color:#000;letter-spacing:0.25px">Potential</div>
<div class="t" style="left:460.5px;top:293.13px;font-size:17.8px;line-height:17.8px;font-weight:400;color:#000;letter-spacing:0.25px">Potential</div>
<div class="t" style="left:670.2px;top:293.13px;font-size:17.8px;line-height:17.8px;font-weight:400;color:#000;letter-spacing:-0.25px">Kit Order</div>
<div class="t" style="left:895.5px;top:293.13px;font-size:17.8px;line-height:17.8px;font-weight:400;color:#000;letter-spacing:-0.25px"></div>
<div class="t" style="left:1011px;top:293.13px;font-size:17.8px;line-height:17.8px;font-weight:400;color:#000;width:113.79999999999995px;text-align:right;letter-spacing:-0.25px">0.00</div>
<div class="t" style="left:1135.4px;top:293.13px;font-size:17.8px;line-height:17.8px;font-weight:400;color:#000;letter-spacing:-0.25px">Lenovo Inc.</div>
<div class="t" style="left:1375.2px;top:293.13px;font-size:17.8px;line-height:17.8px;font-weight:400;color:#000;letter-spacing:-0.25px">Lee K Xinping</div>
<div class="t" style="left:1539.2px;top:293.13px;font-size:17.8px;line-height:17.8px;font-weight:400;color:#000;letter-spacing:0.4px">07/22/2023 ...</div>
<div class="t" style="left:1674.6000000000001px;top:293.13px;font-size:17.8px;line-height:17.8px;font-weight:400;color:#000;letter-spacing:0.4px">07/23/2023 ...</div>
<div class="t" style="left:1795.9px;top:293.13px;font-size:17.8px;line-height:17.8px;font-weight:400;color:#000;letter-spacing:-0.25px">Open</div>
<div style="position:absolute;left:0;top:341.70px;width:1895px;height:1px;background:#e9e9e9"></div>
<div style="position:absolute;left:8px;top:318.70px;width:21px;height:21px;border:2px solid #d2d2d2;border-radius:4px;box-sizing:border-box"></div>
<div class="t" style="left:40.7px;top:321.63px;font-size:17.8px;line-height:17.8px;font-weight:400;color:#000;letter-spacing:-0.55px">SFO_00006</div>
<div class="t" style="left:175.7px;top:321.63px;font-size:17.8px;line-height:17.8px;font-weight:400;color:#000;letter-spacing:-0.25px">SignOff</div>
<div class="t" style="left:310.4px;top:321.63px;font-size:17.8px;line-height:17.8px;font-weight:400;color:#000;letter-spacing:0.25px">Potential</div>
<div class="t" style="left:460.5px;top:321.63px;font-size:17.8px;line-height:17.8px;font-weight:400;color:#000;letter-spacing:0.25px">Potential</div>
<div class="t" style="left:670.2px;top:321.63px;font-size:17.8px;line-height:17.8px;font-weight:400;color:#000;letter-spacing:-0.25px">Batch order</div>
<div class="t" style="left:895.5px;top:321.63px;font-size:17.8px;line-height:17.8px;font-weight:400;color:#000;letter-spacing:-0.25px"></div>
<div class="t" style="left:1011px;top:321.63px;font-size:17.8px;line-height:17.8px;font-weight:400;color:#000;width:113.79999999999995px;text-align:right;letter-spacing:-0.25px">0.00</div>
<div class="t" style="left:1135.4px;top:321.63px;font-size:17.8px;line-height:17.8px;font-weight:400;color:#000;letter-spacing:-0.25px">Lenovo Inc.</div>
<div class="t" style="left:1375.2px;top:321.63px;font-size:17.8px;line-height:17.8px;font-weight:400;color:#000;letter-spacing:-0.25px">Lee K Xinping</div>
<div class="t" style="left:1539.2px;top:321.63px;font-size:17.8px;line-height:17.8px;font-weight:400;color:#000;letter-spacing:0.4px">07/26/2023 ...</div>
<div class="t" style="left:1674.6000000000001px;top:321.63px;font-size:17.8px;line-height:17.8px;font-weight:400;color:#000;letter-spacing:0.4px">07/27/2023 ...</div>
<div class="t" style="left:1795.9px;top:321.63px;font-size:17.8px;line-height:17.8px;font-weight:400;color:#000;letter-spacing:-0.25px">Open</div>
<div style="position:absolute;left:0;top:370.20px;width:1895px;height:1px;background:#e9e9e9"></div>
<div style="position:absolute;left:8px;top:347.20px;width:21px;height:21px;border:2px solid #d2d2d2;border-radius:4px;box-sizing:border-box"></div>
<div class="t" style="left:40.7px;top:350.13px;font-size:17.8px;line-height:17.8px;font-weight:400;color:#000;letter-spacing:-0.55px">SFO_00015</div>
<div class="t" style="left:175.7px;top:350.13px;font-size:17.8px;line-height:17.8px;font-weight:400;color:#000;letter-spacing:-0.25px">SignOff</div>
<div class="t" style="left:310.4px;top:350.13px;font-size:17.8px;line-height:17.8px;font-weight:400;color:#000;letter-spacing:0.25px">Potential</div>
<div class="t" style="left:460.5px;top:350.13px;font-size:17.8px;line-height:17.8px;font-weight:400;color:#000;letter-spacing:0.25px">Potential</div>
<div class="t" style="left:670.2px;top:350.13px;font-size:17.8px;line-height:17.8px;font-weight:400;color:#000;letter-spacing:-0.25px">New sample return items</div>
<div class="t" style="left:895.5px;top:350.13px;font-size:17.8px;line-height:17.8px;font-weight:400;color:#000;letter-spacing:-0.25px"></div>
<div class="t" style="left:1011px;top:350.13px;font-size:17.8px;line-height:17.8px;font-weight:400;color:#000;width:113.79999999999995px;text-align:right;letter-spacing:-0.25px">0.00</div>
<div class="t" style="left:1135.4px;top:350.13px;font-size:17.8px;line-height:17.8px;font-weight:400;color:#000;letter-spacing:-0.25px">Sony</div>
<div class="t" style="left:1375.2px;top:350.13px;font-size:17.8px;line-height:17.8px;font-weight:400;color:#000;letter-spacing:-0.25px">UBS group</div>
<div class="t" style="left:1539.2px;top:350.13px;font-size:17.8px;line-height:17.8px;font-weight:400;color:#000;letter-spacing:0.4px">08/04/2023 ...</div>
<div class="t" style="left:1674.6000000000001px;top:350.13px;font-size:17.8px;line-height:17.8px;font-weight:400;color:#000;letter-spacing:0.4px">08/05/2023 ...</div>
<div class="t" style="left:1795.9px;top:350.13px;font-size:17.8px;line-height:17.8px;font-weight:400;color:#000;letter-spacing:-0.25px">Open</div>
<div style="position:absolute;left:0;top:398.70px;width:1895px;height:1px;background:#e9e9e9"></div>
<div style="position:absolute;left:8px;top:375.70px;width:21px;height:21px;border:2px solid #d2d2d2;border-radius:4px;box-sizing:border-box"></div>
<div class="t" style="left:40.7px;top:378.63px;font-size:17.8px;line-height:17.8px;font-weight:400;color:#000;letter-spacing:-0.55px">SFO_00016</div>
<div class="t" style="left:175.7px;top:378.63px;font-size:17.8px;line-height:17.8px;font-weight:400;color:#000;letter-spacing:-0.25px">Contract</div>
<div class="t" style="left:310.4px;top:378.63px;font-size:17.8px;line-height:17.8px;font-weight:400;color:#000;letter-spacing:0.25px">Potential</div>
<div class="t" style="left:460.5px;top:378.63px;font-size:17.8px;line-height:17.8px;font-weight:400;color:#000;letter-spacing:0.25px">Potential</div>
<div class="t" style="left:670.2px;top:378.63px;font-size:17.8px;line-height:17.8px;font-weight:400;color:#000;letter-spacing:-0.25px">Shipping site</div>
<div class="t" style="left:895.5px;top:378.63px;font-size:17.8px;line-height:17.8px;font-weight:400;color:#000;letter-spacing:-0.25px"></div>
<div class="t" style="left:1011px;top:378.63px;font-size:17.8px;line-height:17.8px;font-weight:400;color:#000;width:113.79999999999995px;text-align:right;letter-spacing:-0.25px">0.00</div>
<div class="t" style="left:1135.4px;top:378.63px;font-size:17.8px;line-height:17.8px;font-weight:400;color:#000;letter-spacing:-0.25px">Sony</div>
<div class="t" style="left:1375.2px;top:378.63px;font-size:17.8px;line-height:17.8px;font-weight:400;color:#000;letter-spacing:-0.25px">UBS group</div>
<div class="t" style="left:1539.2px;top:378.63px;font-size:17.8px;line-height:17.8px;font-weight:400;color:#000;letter-spacing:0.4px">08/18/2023 ...</div>
<div class="t" style="left:1674.6000000000001px;top:378.63px;font-size:17.8px;line-height:17.8px;font-weight:400;color:#000;letter-spacing:0.4px">08/19/2023 ...</div>
<div class="t" style="left:1795.9px;top:378.63px;font-size:17.8px;line-height:17.8px;font-weight:400;color:#000;letter-spacing:-0.25px">Open</div>
<div style="position:absolute;left:0;top:427.20px;width:1895px;height:1px;background:#e9e9e9"></div>
<div style="position:absolute;left:8px;top:404.20px;width:21px;height:21px;border:2px solid #d2d2d2;border-radius:4px;box-sizing:border-box"></div>
<div class="t" style="left:40.7px;top:407.13px;font-size:17.8px;line-height:17.8px;font-weight:400;color:#000;letter-spacing:-0.55px">SFO_00018</div>
<div class="t" style="left:175.7px;top:407.13px;font-size:17.8px;line-height:17.8px;font-weight:400;color:#000;letter-spacing:-0.25px">In Process</div>
<div class="t" style="left:310.4px;top:407.13px;font-size:17.8px;line-height:17.8px;font-weight:400;color:#000;letter-spacing:0.25px">Potential</div>
<div class="t" style="left:460.5px;top:407.13px;font-size:17.8px;line-height:17.8px;font-weight:400;color:#000;letter-spacing:0.25px">Potential</div>
<div class="t" style="left:670.2px;top:407.13px;font-size:17.8px;line-height:17.8px;font-weight:400;color:#000;letter-spacing:-0.25px"></div>
<div class="t" style="left:895.5px;top:407.13px;font-size:17.8px;line-height:17.8px;font-weight:400;color:#000;letter-spacing:-0.25px"></div>
<div class="t" style="left:1011px;top:407.13px;font-size:17.8px;line-height:17.8px;font-weight:400;color:#000;width:113.79999999999995px;text-align:right;letter-spacing:-0.25px">0.00</div>
<div class="t" style="left:1135.4px;top:407.13px;font-size:17.8px;line-height:17.8px;font-weight:400;color:#000;letter-spacing:-0.25px">Sony</div>
<div class="t" style="left:1375.2px;top:407.13px;font-size:17.8px;line-height:17.8px;font-weight:400;color:#000;letter-spacing:-0.25px">UBS group</div>
<div class="t" style="left:1539.2px;top:407.13px;font-size:17.8px;line-height:17.8px;font-weight:400;color:#000;letter-spacing:0.4px">09/06/2023 ...</div>
<div class="t" style="left:1674.6000000000001px;top:407.13px;font-size:17.8px;line-height:17.8px;font-weight:400;color:#000;letter-spacing:0.4px">09/07/2023 ...</div>
<div class="t" style="left:1795.9px;top:407.13px;font-size:17.8px;line-height:17.8px;font-weight:400;color:#000;letter-spacing:-0.25px">Open</div>
<div style="position:absolute;left:0;top:455.70px;width:1895px;height:1px;background:#e9e9e9"></div>
<div style="position:absolute;left:8px;top:432.70px;width:21px;height:21px;border:2px solid #d2d2d2;border-radius:4px;box-sizing:border-box"></div>
<div class="t" style="left:40.7px;top:435.63px;font-size:17.8px;line-height:17.8px;font-weight:400;color:#000;letter-spacing:-0.55px">SFO_00021</div>
<div class="t" style="left:175.7px;top:435.63px;font-size:17.8px;line-height:17.8px;font-weight:400;color:#000;letter-spacing:-0.25px">Contract</div>
<div class="t" style="left:310.4px;top:435.63px;font-size:17.8px;line-height:17.8px;font-weight:400;color:#000;letter-spacing:0.25px">Potential</div>
<div class="t" style="left:460.5px;top:435.63px;font-size:17.8px;line-height:17.8px;font-weight:400;color:#000;letter-spacing:0.25px">Potential</div>
<div class="t" style="left:670.2px;top:435.63px;font-size:17.8px;line-height:17.8px;font-weight:400;color:#000;letter-spacing:-0.25px">New WH Order</div>
<div class="t" style="left:895.5px;top:435.63px;font-size:17.8px;line-height:17.8px;font-weight:400;color:#000;letter-spacing:-0.25px"></div>
<div class="t" style="left:1011px;top:435.63px;font-size:17.8px;line-height:17.8px;font-weight:400;color:#000;width:113.79999999999995px;text-align:right;letter-spacing:-0.25px">0.00</div>
<div class="t" style="left:1135.4px;top:435.63px;font-size:17.8px;line-height:17.8px;font-weight:400;color:#000;letter-spacing:-0.25px">Sony</div>
<div class="t" style="left:1375.2px;top:435.63px;font-size:17.8px;line-height:17.8px;font-weight:400;color:#000;letter-spacing:-0.25px">UBS group</div>
<div class="t" style="left:1539.2px;top:435.63px;font-size:17.8px;line-height:17.8px;font-weight:400;color:#000;letter-spacing:0.4px">03/15/2024 ...</div>
<div class="t" style="left:1674.6000000000001px;top:435.63px;font-size:17.8px;line-height:17.8px;font-weight:400;color:#000;letter-spacing:0.4px">03/16/2024 ...</div>
<div class="t" style="left:1795.9px;top:435.63px;font-size:17.8px;line-height:17.8px;font-weight:400;color:#000;letter-spacing:-0.25px">Open</div>
<div style="position:absolute;left:0;top:484.20px;width:1895px;height:1px;background:#e9e9e9"></div>
<div style="position:absolute;left:8px;top:461.20px;width:21px;height:21px;border:2px solid #d2d2d2;border-radius:4px;box-sizing:border-box"></div>
<div class="t" style="left:40.7px;top:464.13px;font-size:17.8px;line-height:17.8px;font-weight:400;color:#000;letter-spacing:-0.55px">SFO_00022</div>
<div class="t" style="left:175.7px;top:464.13px;font-size:17.8px;line-height:17.8px;font-weight:400;color:#000;letter-spacing:-0.25px">Reservation</div>
<div class="t" style="left:310.4px;top:464.13px;font-size:17.8px;line-height:17.8px;font-weight:400;color:#000;letter-spacing:0.25px">Potential</div>
<div class="t" style="left:460.5px;top:464.13px;font-size:17.8px;line-height:17.8px;font-weight:400;color:#000;letter-spacing:0.25px">Potential</div>
<div class="t" style="left:670.2px;top:464.13px;font-size:17.8px;line-height:17.8px;font-weight:400;color:#000;letter-spacing:-0.25px">New order Warehouse</div>
<div class="t" style="left:895.5px;top:464.13px;font-size:17.8px;line-height:17.8px;font-weight:400;color:#000;letter-spacing:-0.25px"></div>
<div class="t" style="left:1011px;top:464.13px;font-size:17.8px;line-height:17.8px;font-weight:400;color:#000;width:113.79999999999995px;text-align:right;letter-spacing:-0.25px">0.00</div>
<div class="t" style="left:1135.4px;top:464.13px;font-size:17.8px;line-height:17.8px;font-weight:400;color:#000;letter-spacing:-0.25px">Sony</div>
<div class="t" style="left:1375.2px;top:464.13px;font-size:17.8px;line-height:17.8px;font-weight:400;color:#000;letter-spacing:-0.25px">UBS group</div>
<div class="t" style="left:1539.2px;top:464.13px;font-size:17.8px;line-height:17.8px;font-weight:400;color:#000;letter-spacing:0.4px">03/15/2024 ...</div>
<div class="t" style="left:1674.6000000000001px;top:464.13px;font-size:17.8px;line-height:17.8px;font-weight:400;color:#000;letter-spacing:0.4px">03/16/2024 ...</div>
<div class="t" style="left:1795.9px;top:464.13px;font-size:17.8px;line-height:17.8px;font-weight:400;color:#000;letter-spacing:-0.25px">Open</div>
<div style="position:absolute;left:0;top:512.70px;width:1895px;height:1px;background:#e9e9e9"></div>
<div style="position:absolute;left:8px;top:489.70px;width:21px;height:21px;border:2px solid #d2d2d2;border-radius:4px;box-sizing:border-box"></div>
<div class="t" style="left:40.7px;top:492.63px;font-size:17.8px;line-height:17.8px;font-weight:400;color:#000;letter-spacing:-0.55px">SFO_00001</div>
<div class="t" style="left:175.7px;top:492.63px;font-size:17.8px;line-height:17.8px;font-weight:400;color:#000;letter-spacing:-0.25px">Contract</div>
<div class="t" style="left:310.4px;top:492.63px;font-size:17.8px;line-height:17.8px;font-weight:400;color:#000;letter-spacing:0.25px">Potential</div>
<div class="t" style="left:460.5px;top:492.63px;font-size:17.8px;line-height:17.8px;font-weight:400;color:#000;letter-spacing:0.25px">Potential</div>
<div class="t" style="left:670.2px;top:492.63px;font-size:17.8px;line-height:17.8px;font-weight:400;color:#000;letter-spacing:-0.25px">Shure VOG Mic</div>
<div class="t" style="left:895.5px;top:492.63px;font-size:17.8px;line-height:17.8px;font-weight:400;color:#000;letter-spacing:-0.25px"></div>
<div class="t" style="left:1011px;top:492.63px;font-size:17.8px;line-height:17.8px;font-weight:400;color:#000;width:113.79999999999995px;text-align:right;letter-spacing:-0.25px">0.00</div>
<div class="t" style="left:1135.4px;top:492.63px;font-size:17.8px;line-height:17.8px;font-weight:400;color:#000;letter-spacing:-0.25px">Lenovo Inc.</div>
<div class="t" style="left:1375.2px;top:492.63px;font-size:17.8px;line-height:17.8px;font-weight:400;color:#000;letter-spacing:-0.25px">Lee K Xinping</div>
<div class="t" style="left:1539.2px;top:492.63px;font-size:17.8px;line-height:17.8px;font-weight:400;color:#000;letter-spacing:0.4px">07/10/2023 ...</div>
<div class="t" style="left:1674.6000000000001px;top:492.63px;font-size:17.8px;line-height:17.8px;font-weight:400;color:#000;letter-spacing:0.4px">07/17/2023 ...</div>
<div class="t" style="left:1795.9px;top:492.63px;font-size:17.8px;line-height:17.8px;font-weight:400;color:#000;letter-spacing:-0.25px">Open</div>
<div style="position:absolute;left:0;top:541.20px;width:1895px;height:1px;background:#e9e9e9"></div>
<div style="position:absolute;left:8px;top:518.20px;width:21px;height:21px;border:2px solid #d2d2d2;border-radius:4px;box-sizing:border-box"></div>
<div class="t" style="left:40.7px;top:521.13px;font-size:17.8px;line-height:17.8px;font-weight:400;color:#000;letter-spacing:-0.55px">SFO_00003</div>
<div class="t" style="left:175.7px;top:521.13px;font-size:17.8px;line-height:17.8px;font-weight:400;color:#000;letter-spacing:-0.25px">Contract</div>
<div class="t" style="left:310.4px;top:521.13px;font-size:17.8px;line-height:17.8px;font-weight:400;color:#000;letter-spacing:0.25px">Potential</div>
<div class="t" style="left:460.5px;top:521.13px;font-size:17.8px;line-height:17.8px;font-weight:400;color:#000;letter-spacing:0.25px">Potential</div>
<div class="t" style="left:670.2px;top:521.13px;font-size:17.8px;line-height:17.8px;font-weight:400;color:#000;letter-spacing:-0.25px">Shure VOG Mic</div>
<div class="t" style="left:895.5px;top:521.13px;font-size:17.8px;line-height:17.8px;font-weight:400;color:#000;letter-spacing:-0.25px"></div>
<div class="t" style="left:1011px;top:521.13px;font-size:17.8px;line-height:17.8px;font-weight:400;color:#000;width:113.79999999999995px;text-align:right;letter-spacing:-0.25px">0.00</div>
<div class="t" style="left:1135.4px;top:521.13px;font-size:17.8px;line-height:17.8px;font-weight:400;color:#000;letter-spacing:-0.25px">Lenovo Inc.</div>
<div class="t" style="left:1375.2px;top:521.13px;font-size:17.8px;line-height:17.8px;font-weight:400;color:#000;letter-spacing:-0.25px">Lee K Xinping</div>
<div class="t" style="left:1539.2px;top:521.13px;font-size:17.8px;line-height:17.8px;font-weight:400;color:#000;letter-spacing:0.4px">07/10/2023 ...</div>
<div class="t" style="left:1674.6000000000001px;top:521.13px;font-size:17.8px;line-height:17.8px;font-weight:400;color:#000;letter-spacing:0.4px">07/17/2023 ...</div>
<div class="t" style="left:1795.9px;top:521.13px;font-size:17.8px;line-height:17.8px;font-weight:400;color:#000;letter-spacing:-0.25px">Open</div>
<div style="position:absolute;left:0;top:569.70px;width:1895px;height:1px;background:#e9e9e9"></div>
<div style="position:absolute;left:8px;top:546.70px;width:21px;height:21px;border:2px solid #d2d2d2;border-radius:4px;box-sizing:border-box"></div>
<div class="t" style="left:40.7px;top:549.63px;font-size:17.8px;line-height:17.8px;font-weight:400;color:#000;letter-spacing:-0.55px">SFO_00005</div>
<div class="t" style="left:175.7px;top:549.63px;font-size:17.8px;line-height:17.8px;font-weight:400;color:#000;letter-spacing:-0.25px">In Process</div>
<div class="t" style="left:310.4px;top:549.63px;font-size:17.8px;line-height:17.8px;font-weight:400;color:#000;letter-spacing:0.25px">Potential</div>
<div class="t" style="left:460.5px;top:549.63px;font-size:17.8px;line-height:17.8px;font-weight:400;color:#000;letter-spacing:0.25px">Potential</div>
<div class="t" style="left:670.2px;top:549.63px;font-size:17.8px;line-height:17.8px;font-weight:400;color:#000;letter-spacing:-0.25px">PO with non serial item</div>
<div class="t" style="left:895.5px;top:549.63px;font-size:17.8px;line-height:17.8px;font-weight:400;color:#000;letter-spacing:-0.25px"></div>
<div class="t" style="left:1011px;top:549.63px;font-size:17.8px;line-height:17.8px;font-weight:400;color:#000;width:113.79999999999995px;text-align:right;letter-spacing:-0.25px">0.00</div>
<div class="t" style="left:1135.4px;top:549.63px;font-size:17.8px;line-height:17.8px;font-weight:400;color:#000;letter-spacing:-0.25px">Lenovo Inc.</div>
<div class="t" style="left:1375.2px;top:549.63px;font-size:17.8px;line-height:17.8px;font-weight:400;color:#000;letter-spacing:-0.25px">Lee K Xinping</div>
<div class="t" style="left:1539.2px;top:549.63px;font-size:17.8px;line-height:17.8px;font-weight:400;color:#000;letter-spacing:0.4px">07/22/2023 ...</div>
<div class="t" style="left:1674.6000000000001px;top:549.63px;font-size:17.8px;line-height:17.8px;font-weight:400;color:#000;letter-spacing:0.4px">07/23/2023 ...</div>
<div class="t" style="left:1795.9px;top:549.63px;font-size:17.8px;line-height:17.8px;font-weight:400;color:#000;letter-spacing:-0.25px">Open</div>
<div style="position:absolute;left:0;top:598.20px;width:1895px;height:1px;background:#e9e9e9"></div>
<div style="position:absolute;left:8px;top:575.20px;width:21px;height:21px;border:2px solid #d2d2d2;border-radius:4px;box-sizing:border-box"></div>
<div class="t" style="left:40.7px;top:578.13px;font-size:17.8px;line-height:17.8px;font-weight:400;color:#000;letter-spacing:-0.55px">SFO_00007</div>
<div class="t" style="left:175.7px;top:578.13px;font-size:17.8px;line-height:17.8px;font-weight:400;color:#000;letter-spacing:-0.25px">Contract</div>
<div class="t" style="left:310.4px;top:578.13px;font-size:17.8px;line-height:17.8px;font-weight:400;color:#000;letter-spacing:0.25px">Potential</div>
<div class="t" style="left:460.5px;top:578.13px;font-size:17.8px;line-height:17.8px;font-weight:400;color:#000;letter-spacing:0.25px">Potential</div>
<div class="t" style="left:670.2px;top:578.13px;font-size:17.8px;line-height:17.8px;font-weight:400;color:#000;letter-spacing:-0.25px"></div>
<div class="t" style="left:895.5px;top:578.13px;font-size:17.8px;line-height:17.8px;font-weight:400;color:#000;letter-spacing:-0.25px"></div>
<div class="t" style="left:1011px;top:578.13px;font-size:17.8px;line-height:17.8px;font-weight:400;color:#000;width:113.79999999999995px;text-align:right;letter-spacing:-0.25px">0.00</div>
<div class="t" style="left:1135.4px;top:578.13px;font-size:17.8px;line-height:17.8px;font-weight:400;color:#000;letter-spacing:-0.25px">Soft Bank</div>
<div class="t" style="left:1375.2px;top:578.13px;font-size:17.8px;line-height:17.8px;font-weight:400;color:#000;letter-spacing:-0.25px">Alex  Conklin</div>
<div class="t" style="left:1539.2px;top:578.13px;font-size:17.8px;line-height:17.8px;font-weight:400;color:#000;letter-spacing:0.4px">07/27/2023 ...</div>
<div class="t" style="left:1674.6000000000001px;top:578.13px;font-size:17.8px;line-height:17.8px;font-weight:400;color:#000;letter-spacing:0.4px">07/28/2023 ...</div>
<div class="t" style="left:1795.9px;top:578.13px;font-size:17.8px;line-height:17.8px;font-weight:400;color:#000;letter-spacing:-0.25px">Open</div>
</div>
<div style="position:absolute;left:5px;top:298px;width:34px;height:35px;box-sizing:border-box;border:1px solid #a0a0a0;border-right:2px solid #a0a0a0;background:#e3e3e3;box-shadow:inset 1px 1px 0 #fff"></div>
<div class="t" style="left:7.5px;top:308.80px;font-size:17.6px;line-height:17.6px;font-weight:400;color:#000;width:34px;text-align:center;letter-spacing:0.3px">S</div>
<div style="position:absolute;left:41px;top:298px;width:133px;height:35px;box-sizing:border-box;border:1px solid #a0a0a0;border-right:2px solid #a0a0a0;background:#ececec;box-shadow:inset 1px 1px 0 #fff"></div>
<div class="t" style="left:43.5px;top:308.80px;font-size:17.6px;line-height:17.6px;font-weight:400;color:#000;width:133px;text-align:center;letter-spacing:0.3px">Order Id</div>
<div style="position:absolute;left:176px;top:298px;width:133px;height:35px;box-sizing:border-box;border:1px solid #a0a0a0;border-right:2px solid #a0a0a0;background:#ececec;box-shadow:inset 1px 1px 0 #fff"></div>
<div class="t" style="left:178.5px;top:308.80px;font-size:17.6px;line-height:17.6px;font-weight:400;color:#000;width:133px;text-align:center;letter-spacing:0.8px">Type</div>
<div style="position:absolute;left:311px;top:298px;width:147px;height:35px;box-sizing:border-box;border:1px solid #a0a0a0;border-right:2px solid #a0a0a0;background:#ececec;box-shadow:inset 1px 1px 0 #fff"></div>
<div class="t" style="left:313.5px;top:308.80px;font-size:17.6px;line-height:17.6px;font-weight:400;color:#000;width:147px;text-align:center;letter-spacing:0.3px">Company Status</div>
<div style="position:absolute;left:461px;top:298px;width:208px;height:35px;box-sizing:border-box;border:1px solid #a0a0a0;border-right:2px solid #a0a0a0;background:#ececec;box-shadow:inset 1px 1px 0 #fff"></div>
<div class="t" style="left:463.5px;top:308.80px;font-size:17.6px;line-height:17.6px;font-weight:400;color:#000;width:208px;text-align:center;letter-spacing:0.3px">Billing Company Status</div>
<div style="position:absolute;left:671px;top:298px;width:223px;height:35px;box-sizing:border-box;border:1px solid #a0a0a0;border-right:2px solid #a0a0a0;background:#ececec;box-shadow:inset 1px 1px 0 #fff"></div>
<div class="t" style="left:673.5px;top:308.80px;font-size:17.6px;line-height:17.6px;font-weight:400;color:#000;width:223px;text-align:center;letter-spacing:0.3px">Description</div>
<div style="position:absolute;left:896px;top:298px;width:118px;height:35px;box-sizing:border-box;border:1px solid #a0a0a0;border-right:2px solid #a0a0a0;background:#ececec;box-shadow:inset 1px 1px 0 #fff"></div>
<div class="t" style="left:898.5px;top:308.80px;font-size:17.6px;line-height:17.6px;font-weight:400;color:#000;width:118px;text-align:center;letter-spacing:0.3px">Sales Person</div>
<div style="position:absolute;left:1016px;top:298px;width:118px;height:35px;box-sizing:border-box;border:1px solid #a0a0a0;border-right:2px solid #a0a0a0;background:#ececec;box-shadow:inset 1px 1px 0 #fff"></div>
<div class="t" style="left:1018.5px;top:308.80px;font-size:17.6px;line-height:17.6px;font-weight:400;color:#000;width:118px;text-align:center;letter-spacing:0px">Amount</div>
<div style="position:absolute;left:1136px;top:298px;width:238px;height:35px;box-sizing:border-box;border:1px solid #a0a0a0;border-right:2px solid #a0a0a0;background:#ececec;box-shadow:inset 1px 1px 0 #fff"></div>
<div class="t" style="left:1138.5px;top:308.80px;font-size:17.6px;line-height:17.6px;font-weight:400;color:#000;width:238px;text-align:center;letter-spacing:0.3px">Company</div>
<div style="position:absolute;left:1376px;top:298px;width:148px;height:35px;box-sizing:border-box;border:1px solid #a0a0a0;border-right:2px solid #a0a0a0;background:#ececec;box-shadow:inset 1px 1px 0 #fff"></div>
<div class="t" style="left:1378.5px;top:308.80px;font-size:17.6px;line-height:17.6px;font-weight:400;color:#000;width:148px;text-align:center;letter-spacing:0.05px">Contact</div>
<div style="position:absolute;left:1526px;top:298px;width:133px;height:35px;box-sizing:border-box;border:1px solid #a0a0a0;border-right:2px solid #a0a0a0;background:#ececec;box-shadow:inset 1px 1px 0 #fff"></div>
<div class="t" style="left:1528.5px;top:308.80px;font-size:17.6px;line-height:17.6px;font-weight:400;color:#000;width:133px;text-align:center;letter-spacing:0.3px">Start Date</div>
<div style="position:absolute;left:1661px;top:298px;width:133px;height:35px;box-sizing:border-box;border:1px solid #a0a0a0;border-right:2px solid #a0a0a0;background:#ececec;box-shadow:inset 1px 1px 0 #fff"></div>
<div class="t" style="left:1663.5px;top:308.80px;font-size:17.6px;line-height:17.6px;font-weight:400;color:#000;width:133px;text-align:center;letter-spacing:0.5px">End Date</div>
<div style="position:absolute;left:1796px;top:298px;width:104px;height:35px;box-sizing:border-box;border:1px solid #a0a0a0;border-right:1px solid #a0a0a0;background:#ececec;box-shadow:inset 1px 1px 0 #fff"></div>
<div class="t" style="left:1799.5px;top:308.80px;font-size:17.6px;line-height:17.6px;font-weight:400;color:#000;width:104px;text-align:center;letter-spacing:0.5px">Status</div>
<div style="position:absolute;left:1900px;top:298px;width:15px;height:510px;background:#dadada"></div>
<div style="position:absolute;left:1900px;top:808px;width:15px;height:112px;background:#f3f3f3"></div>
<div style="position:absolute;left:5px;top:920px;width:1895px;height:16px;background:#f3f3f3"></div>
<div style="position:absolute;left:6px;top:920px;width:503px;height:15px;background:#dadada"></div>
</body></html>
